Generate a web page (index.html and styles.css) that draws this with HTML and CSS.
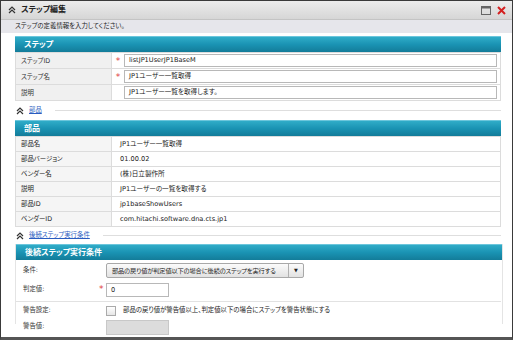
FILE: index.html
```html
<!DOCTYPE html>
<html lang="ja">
<head>
  <meta charset="UTF-8">
  <title>ステップ編集</title>
  <link rel="stylesheet" href="styles.css">
</head>
<body>
  <div class="window">
    <div class="titlebar">
      <svg class="fold" width="8" height="8" viewBox="0 0 8 8"><path d="M1 4 L4 1 L7 4 M1 7 L4 4 L7 7" fill="none" stroke="#333" stroke-width="1.2"/></svg>
      <span class="title">ステップ編集</span>
      <span class="tools">
        <svg width="10" height="9" viewBox="0 0 10 9"><rect x="0.5" y="0.5" width="9" height="8" fill="none" stroke="#666"/><rect x="0.5" y="0.5" width="9" height="2" fill="#666"/></svg>
        <svg width="9" height="9" viewBox="0 0 9 9"><path d="M1 1 L8 8 M8 1 L1 8" stroke="#d42020" stroke-width="2"/></svg>
      </span>
    </div>
    <div class="subtitle">ステップの定義情報を入力してください。</div>

    <div class="content">
      <div class="section">
        <div class="sec-head">ステップ</div>
        <table class="grid">
          <tr>
            <td class="lbl">ステップID</td>
            <td class="req">*</td>
            <td><div class="input">listJP1UserJP1BaseM</div></td>
          </tr>
          <tr>
            <td class="lbl">ステップ名</td>
            <td class="req">*</td>
            <td><div class="input">JP1ユーザー一覧取得</div></td>
          </tr>
          <tr>
            <td class="lbl">説明</td>
            <td class="req"></td>
            <td><div class="input">JP1ユーザー一覧を取得します。</div></td>
          </tr>
        </table>
      </div>

      <div class="linkrow">
        <svg class="fold" width="8" height="8" viewBox="0 0 8 8"><path d="M1 4 L4 1 L7 4 M1 7 L4 4 L7 7" fill="none" stroke="#333" stroke-width="1.2"/></svg>
        <a href="#">部品</a>
        <span class="rule"></span>
      </div>

      <div class="section">
        <div class="sec-head">部品</div>
        <table class="grid info">
          <tr><td class="lbl">部品名</td><td>JP1ユーザー一覧取得</td></tr>
          <tr><td class="lbl">部品バージョン</td><td>01.00.02</td></tr>
          <tr><td class="lbl">ベンダー名</td><td>(株)日立製作所</td></tr>
          <tr><td class="lbl">説明</td><td>JP1ユーザーの一覧を取得する</td></tr>
          <tr><td class="lbl">部品ID</td><td>jp1baseShowUsers</td></tr>
          <tr><td class="lbl">ベンダーID</td><td>com.hitachi.software.dna.cts.jp1</td></tr>
        </table>
      </div>

      <div class="linkrow tight">
        <svg class="fold" width="8" height="8" viewBox="0 0 8 8"><path d="M1 4 L4 1 L7 4 M1 7 L4 4 L7 7" fill="none" stroke="#333" stroke-width="1.2"/></svg>
        <a href="#">後続ステップ実行条件</a>
        <span class="rule"></span>
      </div>

      <div class="section form">
        <div class="sec-head">後続ステップ実行条件</div>
        <div class="frow first">
          <span class="flbl">条件:</span>
          <span class="freq"></span>
          <div class="select">
            <span class="stext">部品の戻り値が判定値以下の場合に後続のステップを実行する</span>
            <span class="arrow">▼</span>
          </div>
        </div>
        <div class="frow">
          <span class="flbl">判定値:</span>
          <span class="freq">*</span>
          <div class="input small">0</div>
        </div>
        <div class="divider"></div>
        <div class="frow short">
          <span class="flbl">警告設定:</span>
          <span class="freq"></span>
          <span class="check"></span>
          <span class="ctext">部品の戻り値が警告値以上、判定値以下の場合にステップを警告状態にする</span>
        </div>
        <div class="frow short">
          <span class="flbl">警告値:</span>
          <span class="freq"></span>
          <div class="input small disabled"></div>
        </div>
      </div>
    </div>
  </div>
</body>
</html>
```
FILE: styles.css
```css
body {
  margin: 0;
  background: #fff;
  font-family: "DejaVu Sans", "Noto Sans CJK JP", sans-serif;
  font-size: 6.4px;
  line-height: 1.2;
  font-feature-settings: "palt";
  color: #333;
}

.window {
  width: 511px;
  height: 336px;
  border: 1px solid #3a3a3a;
  border-bottom: 3px solid #555;
  overflow: hidden;
}

.titlebar {
  height: 18px;
  display: flex;
  align-items: center;
  padding-left: 7px;
  background: linear-gradient(#ececec, #d6d6d6);
  border-bottom: 1px solid #c4c4c4;
}

.fold {
  display: block;
}

.title {
  margin-left: 5px;
  font-size: 8px;
  font-weight: bold;
  color: #222;
}

.tools {
  margin-left: auto;
  margin-right: 6px;
  display: flex;
  gap: 6px;
  align-items: center;
}

.subtitle {
  height: 13px;
  line-height: 13px;
  padding-left: 14px;
  background: #e6e6eb;
  color: #222;
}

.content {
  padding: 3px 11px 0 14px;
}

.section {
  width: 486px;
}

.sec-head {
  height: 16px;
  line-height: 15px;
  padding-left: 9px;
  background: linear-gradient(#30acc8, #1a93b3 50%, #137c99);
  border-top: 1px solid #6cc6dc;
  box-sizing: border-box;
  color: #fff;
  font-size: 8px;
  font-weight: bold;
}

.grid {
  width: 100%;
  border-collapse: collapse;
  border: 1px solid #dcdcdc;
  border-top: none;
}

.grid td {
  height: 15px;
  padding: 0;
  line-height: 10px;
  border-top: 1px solid #dcdcdc;
  vertical-align: middle;
}

.grid .lbl {
  width: 90px;
  padding-left: 5px;
  background: #f0f0f0;
  border-right: 1px solid #dcdcdc;
}

.grid .req {
  width: 12px;
  text-align: center;
  color: #e04040;
  font-size: 9px;
}

.input {
  height: 13px;
  line-height: 11px;
  margin-right: 3px;
  padding-left: 4px;
  border: 1px solid #b8b8b8;
  box-sizing: border-box;
  background: #fff;
  color: #222;
  font-size: 6.6px;
}

.info td {
  height: 14px;
  padding-left: 8px;
  background: #fff;
  color: #222;
  font-size: 6.6px;
}

.info .lbl {
  width: 90px;
  background: #f5f5f5;
  font-size: 6.4px;
}

.linkrow {
  height: 19px;
  display: flex;
  align-items: center;
  padding-left: 1px;
  gap: 5px;
}

.linkrow.tight {
  height: 17px;
}

.linkrow a {
  color: #2a5cc0;
  text-decoration: underline;
}

.rule {
  flex: 1;
  height: 1px;
  margin-left: 8px;
  background: #dedede;
}

.form {
  height: 80px;
  border-left: 1px solid #e4e4e4;
  border-right: 1px solid #e4e4e4;
}

.frow {
  display: flex;
  align-items: center;
  height: 19px;
  padding-left: 7px;
}

.frow.first {
  margin-top: 1px;
}

.frow.short {
  height: 16px;
}

.flbl {
  width: 76px;
}

.freq {
  width: 7px;
  color: #e04040;
  font-size: 9px;
}

.select {
  width: 198px;
  height: 15px;
  display: flex;
  align-items: center;
  padding-left: 5px;
  box-sizing: border-box;
  border: 1px solid #a8a8a8;
  border-radius: 2px;
  background: linear-gradient(#fbfbfb, #e2e2e2);
  color: #222;
  white-space: nowrap;
  overflow: hidden;
}

.select .stext {
  font-size: 6.2px;
  letter-spacing: -0.1px;
}

.select .arrow {
  margin-left: auto;
  flex: none;
  width: 14px;
  height: 13px;
  line-height: 13px;
  text-align: center;
  border-left: 1px solid #b0b0b0;
  font-size: 5px;
}

.input.small {
  width: 63px;
  height: 14px;
  line-height: 12px;
  margin: 0;
}

.input.disabled {
  height: 15px;
  background: #dcdcdc;
  border-color: #c8c8c8;
}

.divider {
  height: 1px;
  margin: 2px 1px 1px 0;
  background: #e2e2e2;
}

.check {
  width: 10px;
  height: 10px;
  border: 1px solid #aaa;
  background: linear-gradient(#fff, #e6e6e6);
  box-sizing: border-box;
  margin-right: 7px;
}

.ctext {
  color: #222;
}
```
